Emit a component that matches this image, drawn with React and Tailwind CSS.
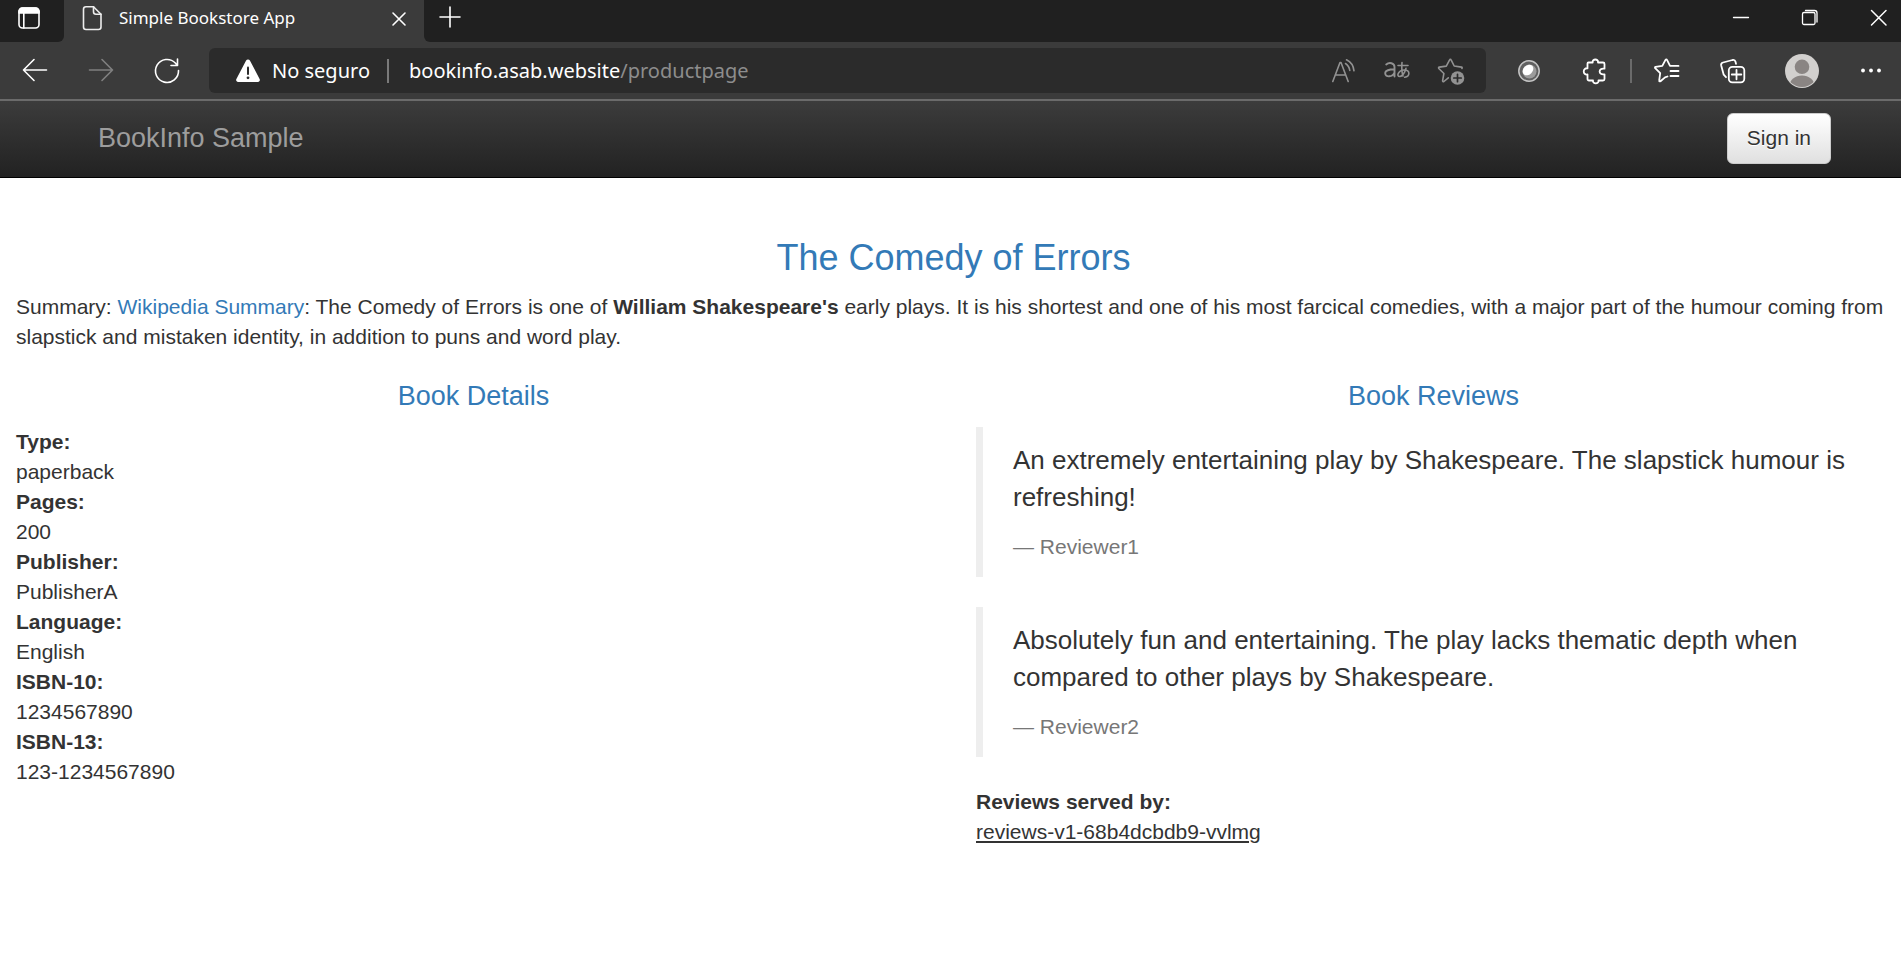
import React from "react";

const stroke = {
  fill: "none",
  stroke: "currentColor",
  strokeLinecap: "round",
  strokeLinejoin: "round",
};

function Icon({ children, size = 30, width = 1.6, className = "" }) {
  return (
    <svg
      width={size}
      height={size}
      viewBox="0 0 30 30"
      aria-hidden="true"
      className={`shrink-0 ${className}`}
      {...stroke}
      strokeWidth={width}
    >
      {children}
    </svg>
  );
}

function IconButton({ label, className = "w-[66px]", children }) {
  return (
    <button type="button" aria-label={label} className={`flex h-full shrink-0 items-center justify-center ${className}`}>
      {children}
    </button>
  );
}

function TabStrip() {
  return (
    <div className="flex h-[42px] bg-[#3b3b3b] text-white">
      <div className="flex w-16 shrink-0 justify-center rounded-br-md bg-[#202020] pb-1.5 pr-1.5">
        <IconButton label="Tab actions" className="w-10">
          <Icon>
            <rect x="5" y="5" width="20" height="20" rx="3.5" />
            <path d="M5 10V8.500a3.500 3.500 0 0 1 3.500-3.500h13a3.500 3.500 0 0 1 3.500 3.500V10Z" fill="currentColor" />
            <path d="M9.800 10v15" />
          </Icon>
        </IconButton>
      </div>
      <div className="flex w-[360px] shrink-0 items-center pb-1.5 pl-[13px] pr-[10px]">
        <Icon className="text-[#ededed]">
          <path d="M9 3.800h7.500L24 11.300V24a2.500 2.500 0 0 1-2.500 2.500H9A2.500 2.500 0 0 1 6.500 24V6.300A2.500 2.500 0 0 1 9 3.800Z" />
          <path d="M16.500 3.800v5a2.500 2.500 0 0 0 2.500 2.500h5" />
        </Icon>
        <span className="ml-[12px] grow truncate text-[17px] leading-6">Simple Bookstore App</span>
        <button type="button" aria-label="Close tab" className="flex size-[30px] items-center justify-center">
          <Icon>
            <path d="m9 10 12 12M21 10 9 22" />
          </Icon>
        </button>
      </div>
      <div className="flex grow items-center justify-between rounded-bl-md bg-[#202020] pb-2">
        <button type="button" aria-label="New tab" className="ml-[11px] flex size-[30px] items-center justify-center">
          <Icon>
            <path d="M15 5v20M5 15h20" />
          </Icon>
        </button>
        <div className="flex h-full items-center">
          <IconButton label="Minimize" className="w-[69px]">
            <Icon width="1.3">
              <path d="M7.500 15.500h15" />
            </Icon>
          </IconButton>
          <IconButton label="Restore" className="w-[69px]">
            <Icon width="1.3">
              <rect x="7.500" y="10.500" width="12.500" height="12" rx="1.500" />
              <path d="M10.500 8.500h9a2.500 2.500 0 0 1 2.500 2.500v9" />
            </Icon>
          </IconButton>
          <IconButton label="Close window" className="w-[57px] pl-3">
            <Icon width="1.5">
              <path d="m7.500 8.500 14.500 14.500M22 8.500 7.500 23" />
            </Icon>
          </IconButton>
        </div>
      </div>
    </div>
  );
}

function AddressBar() {
  return (
    <div className="mx-[9px] flex h-[45px] grow items-center rounded-md bg-[#2b2b2b] pl-6 pr-2 text-[20px] leading-[30px] text-white">
      <svg width="30" height="30" viewBox="0 0 30 30" aria-hidden="true" className="shrink-0">
        <path d="M13.100 4.600 3.400 22.900A2.100 2.100 0 0 0 5.300 26h19.400a2.100 2.100 0 0 0 1.900-3.100L16.900 4.600a2.150 2.150 0 0 0-3.800 0Z" fill="#fff" />
        <path d="M15 11.500v6.500" stroke="#2b2b2b" strokeWidth="2" strokeLinecap="round" />
        <circle cx="15" cy="21.800" r="1.400" fill="#2b2b2b" />
      </svg>
      <span className="ml-[9px] w-[100px] shrink-0 whitespace-nowrap">No seguro</span>
      <span className="ml-[15px] h-6 w-0.5 shrink-0 bg-[#7a7a7a]" />
      <span className="ml-5 grow whitespace-nowrap">
        bookinfo.asab.website<span className="text-[#8d8d8d]">/productpage</span>
      </span>
      <div className="flex h-full text-[#929292]">
        <IconButton label="Read aloud" className="w-[54px]">
          <Icon>
            <path d="M4.800 25.500 12 6.500h1l7.200 19M7.300 19h10.400" />
            <path d="M17.500 7.500c2.400 1.500 3.900 4 4.300 7M18.500 3.800c4.200 2 6.900 5.700 7.500 11" />
          </Icon>
        </IconButton>
        <IconButton label="Translate" className="w-[54px]">
          <Icon width="1.900">
            <path d="M4.200 8.500c3-2.500 8.300-1.700 8.300 2.500v9.500M12.500 13.300c-5 .2-9.300.5-9.300 4 0 4.300 7.500 4 9.300-.8" />
            <path d="M16 9.500h10M20 6.500c-.5 5-.3 9.500 1 13.500M24 12.200c-1 4.500-3.800 8.300-6.300 8.300-3.700 0-1.500-6.300 4.500-6.500 6.300-.2 6 6.500.5 7.300" strokeWidth="1.600" />
          </Icon>
        </IconButton>
        <IconButton label="Add to favorites" className="w-[54px]">
          <Icon>
            <path d="M12.300 21.800 7.900 25.500c-.7.400-1.400 0-1.300-.8l1.300-7.200-5.100-5c-.5-.6-.2-1.300.5-1.400l7-1 3.300-6.300c.3-.7 1.200-.7 1.500 0L18.200 10l7.300 1.100c.7.100.9.800.4 1.400" />
            <circle cx="21.500" cy="22" r="6.800" fill="currentColor" stroke="none" />
            <path d="M21.500 18.300v7.400M17.800 22h7.400" stroke="#2b2b2b" strokeWidth="1.700" />
          </Icon>
        </IconButton>
      </div>
    </div>
  );
}

function Toolbar() {
  return (
    <div className="flex h-[59px] items-center border-b-2 border-[#6b6b6b] bg-[#3b3b3b] pl-0.5 text-white">
      <IconButton label="Back">
        <Icon>
          <path d="M26.500 14H3.500M14 3.500 3.500 14 14 24.500" />
        </Icon>
      </IconButton>
      <button type="button" disabled aria-label="Forward" className="flex h-full w-[66px] shrink-0 items-center justify-center text-[#808080]">
        <Icon>
          <path d="M3.500 14h23M16 3.500 26.500 14 16 24.500" />
        </Icon>
      </button>
      <IconButton label="Refresh">
        <Icon>
          <path d="M26.500 14.500A11.500 11.500 0 1 1 23.300 7l2.200 2.500M25.500 3v6.500H19" />
        </Icon>
      </IconButton>
      <AddressBar />
      <IconButton label="Extension" className="w-[67px]">
        <svg width="30" height="30" viewBox="0 0 30 30" aria-hidden="true">
          <circle cx="15" cy="15" r="10.200" fill="#606060" stroke="#c4c4c4" strokeWidth="1.500" />
          <circle cx="15.500" cy="15.500" r="7" fill="#9b9b9b" />
          <ellipse cx="14" cy="14" rx="6" ry="4.600" fill="#fff" transform="rotate(-45 14 14)" />
        </svg>
      </IconButton>
      <IconButton label="Extensions">
        <Icon width="1.800">
          <path d="M7.500 7.500a1 1 0 0 1 1-1h4.200c-.7-4 6-4 5.300 0h5a1.500 1.500 0 0 1 1.500 1.500v4.700c-6.500-1.200-6.500 7 0 5.600v4.700a1.500 1.500 0 0 1-1.500 1.500h-4.500c.7 3.800-6.200 3.800-5.500 0H9a1.500 1.500 0 0 1-1.500-1.500v-4.500c-5 .8-5-7 0-6.200Z" />
        </Icon>
      </IconButton>
      <span className="mx-[2px] h-6 w-0.5 shrink-0 bg-[#6b6b6b]" />
      <IconButton label="Favorites">
        <Icon width="1.800">
          <path d="m15.500 20.500-2.500.9-4.500 3.800c-.8.500-1.500.1-1.300-.8l1-7.200-5-5c-.5-.5-.3-1.200.4-1.300l6.700-1 3.200-6c.4-.7 1.200-.7 1.500 0l3 6H26.500M18.500 15h8M18.500 20h8" />
        </Icon>
      </IconButton>
      <IconButton label="Collections">
        <Icon width="1.800">
          <rect x="10.800" y="10.800" width="15.500" height="15.500" rx="3.500" />
          <path d="M18.500 13.800v9.500M13.800 18.500h9.500M18 7.800l-.5-2a2.500 2.500 0 0 0-3-1.800L5 6.500a2.500 2.500 0 0 0-1.800 3l2.500 9.200 2.300 2.500" />
        </Icon>
      </IconButton>
      <IconButton label="Profile" className="w-18">
        <svg width="34" height="34" viewBox="0 0 34 34" aria-hidden="true">
          <clipPath id="avatar">
            <circle cx="17" cy="17" r="16" />
          </clipPath>
          <circle cx="17" cy="17" r="17" fill="#d2d0ce" />
          <circle cx="17" cy="12.800" r="7.300" fill="#8a8583" />
          <ellipse cx="17" cy="32" rx="12.500" ry="10.500" fill="#8a8583" clipPath="url(#avatar)" />
        </svg>
      </IconButton>
      <IconButton label="Settings and more" className="ml-[3px] w-15">
        <svg width="30" height="30" viewBox="0 0 30 30" fill="#fff" aria-hidden="true">
          <circle cx="7" cy="14.500" r="1.900" />
          <circle cx="15" cy="14.500" r="1.900" />
          <circle cx="23" cy="14.500" r="1.900" />
        </svg>
      </IconButton>
    </div>
  );
}

const details = [
  ["Type:", "paperback"],
  ["Pages:", "200"],
  ["Publisher:", "PublisherA"],
  ["Language:", "English"],
  ["ISBN-10:", "1234567890"],
  ["ISBN-13:", "123-1234567890"],
];

const reviews = [
  ["An extremely entertaining play by Shakespeare. The slapstick humour is refreshing!", "Reviewer1"],
  [
    "Absolutely fun and entertaining. The play lacks thematic depth when compared to other plays by Shakespeare.",
    "Reviewer2",
  ],
];

export default function App() {
  return (
    <div className="min-h-screen bg-white">
      <header className="font-['Noto_Sans',sans-serif]">
        <TabStrip />
        <Toolbar />
      </header>
      <div className="font-['Liberation_Sans',Arial,sans-serif] text-[21px] leading-[30px] text-[#333]">
        <nav className="flex h-[77px] items-center justify-between border-b border-black bg-linear-to-b from-[#3c3c3c] to-[#222] pb-0.5 pl-[98px] pr-[70px]">
          <a href="#home" className="text-[27px] text-[#9d9d9d]">
            BookInfo Sample
          </a>
          <button
            type="button"
            className="h-[51px] rounded-md border border-[#ccc] bg-linear-to-b from-white to-[#e0e0e0] px-[19px] [text-shadow:0_1px_0_#fff]"
          >
            Sign in
          </button>
        </nav>
        <main className="pb-10 pl-4 pr-2.5 pt-15">
          <h1 className="text-center text-[36px] leading-10 text-[#337ab7]">The Comedy of Errors</h1>
          <p className="mt-[14px]">
            Summary:{" "}
            <a href="#wikipedia" className="text-[#337ab7]">
              Wikipedia Summary
            </a>
            : The Comedy of Errors is one of <b>William Shakespeare's</b> early plays. It is his shortest and one of his
            most farcical comedies, with a major part of the humour coming from slapstick and mistaken identity, in
            addition to puns and word play.
          </p>
          <div className="mt-[29px] grid grid-cols-2 gap-[45px]">
            <section>
              <h2 className="mb-4 text-center text-[27px] text-[#337ab7]">Book Details</h2>
              <dl>
                {details.map(([term, value]) => (
                  <React.Fragment key={term}>
                    <dt className="font-bold">{term}</dt>
                    <dd>{value}</dd>
                  </React.Fragment>
                ))}
              </dl>
            </section>
            <section>
              <h2 className="mb-4 text-center text-[27px] text-[#337ab7]">Book Reviews</h2>
              {reviews.map(([text, author]) => (
                <blockquote key={author} className="mb-[30px] border-l-[7px] border-[#eee] px-[30px] py-[15px]">
                  <p className="text-[26px] leading-[37px]">{text}</p>
                  <footer className="mt-4 text-[#777]">— {author}</footer>
                </blockquote>
              ))}
              <dl>
                <dt className="font-bold">Reviews served by:</dt>
                <dd className="underline">reviews-v1-68b4dcbdb9-vvlmg</dd>
              </dl>
            </section>
          </div>
        </main>
      </div>
    </div>
  );
}
